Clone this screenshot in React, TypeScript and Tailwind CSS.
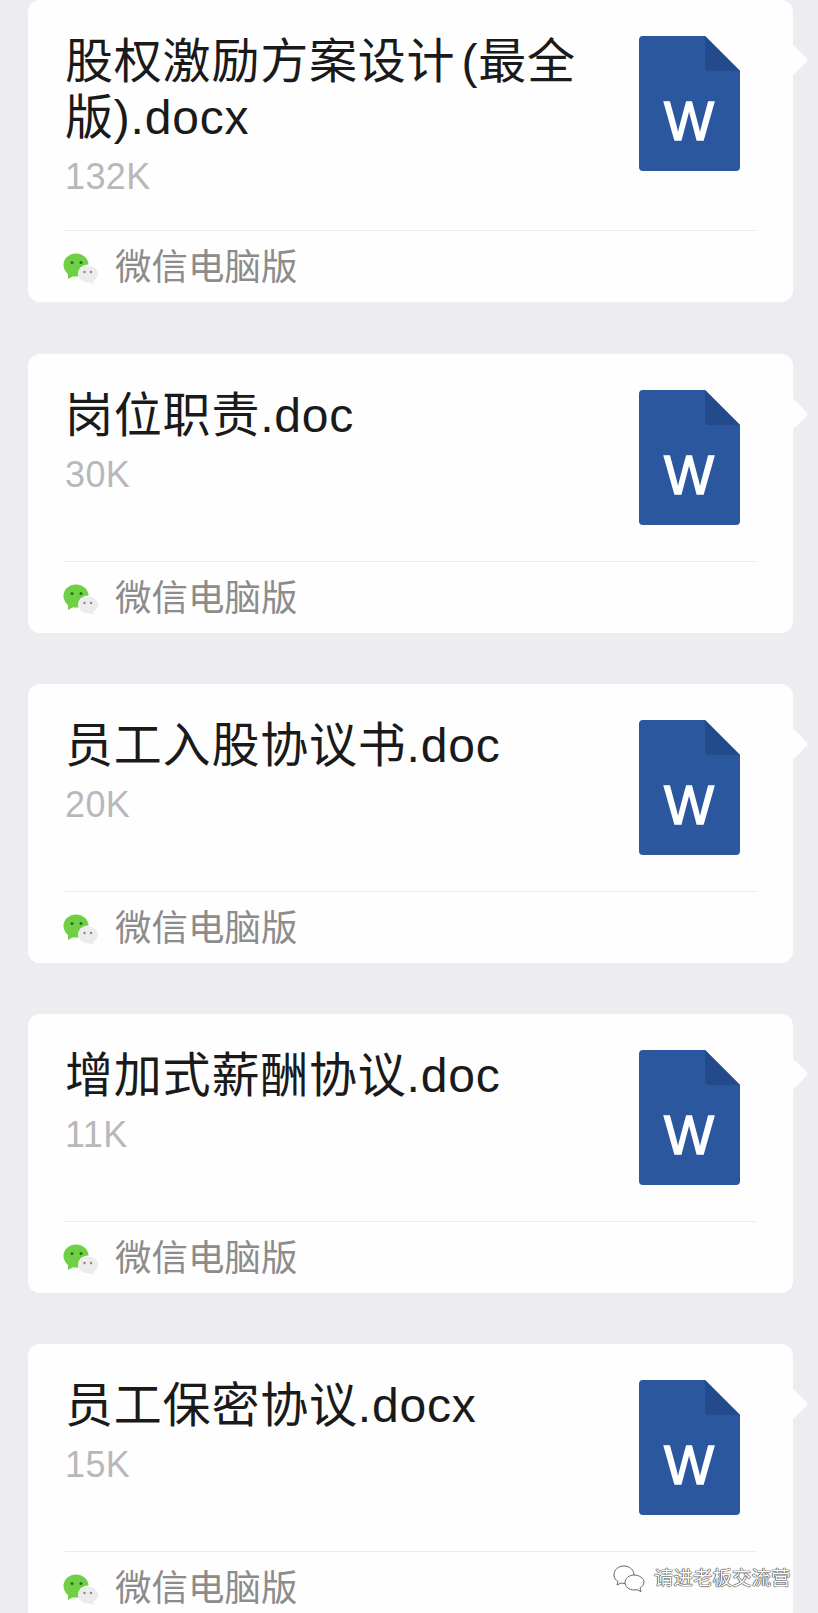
import React from 'react';

const files = [
  { name: '股权激励方案设计 (最全版).docx', size: '132K' },
  { name: '岗位职责.doc', size: '30K' },
  { name: '员工入股协议书.doc', size: '20K' },
  { name: '增加式薪酬协议.doc', size: '11K' },
  { name: '员工保密协议.docx', size: '15K' },
];

function WordIcon() {
  return (
    <svg width="101" height="135" viewBox="0 0 101 135" className="shrink-0">
      <path d="M4 0H66L101 35V131a4 4 0 01-4 4H4a4 4 0 01-4-4V4a4 4 0 014-4z" fill="#2b579f" />
      <path d="M66 0L101 35H70a4 4 0 01-4-4z" fill="#234a8a" />
      <text x="25" y="104" textLength="50" lengthAdjust="spacingAndGlyphs" fontSize="56" stroke="#fff" strokeWidth="1.5" fill="#fff" fontFamily="Liberation Sans, sans-serif">
        W
      </text>
    </svg>
  );
}

function WechatIcon() {
  return (
    <svg width="36" height="32" viewBox="0 0 36 32" className="shrink-0 blur-[0.6px]">
      <ellipse cx="13" cy="12" rx="12.500" ry="11.500" fill="#6fcf45" />
      <path d="M5 19l0 7 7-4z" fill="#6fcf45" />
      <circle cx="9" cy="9.500" r="1.500" fill="#2f6b22" />
      <circle cx="18" cy="9.500" r="1.500" fill="#2f6b22" />
      <ellipse cx="25" cy="20.500" rx="10" ry="9" fill="#ffffff" />
      <ellipse cx="25" cy="21" rx="10" ry="8.500" fill="#ececec" />
      <path d="M29 27l3 4-7-2z" fill="#ececec" />
      <circle cx="21.500" cy="19" r="1.200" fill="#888" />
      <circle cx="28" cy="19" r="1.200" fill="#888" />
    </svg>
  );
}

function FileCard({ name, size }: { name: string; size: string }) {
  return (
    <div className="relative w-[765px] rounded-xl bg-[#fffefe] first:mb-px">
      {/* bubble tail */}
      <div className="absolute left-[754px] top-[49px] h-[22px] w-[22px] rotate-45 rounded-[3px] bg-[#fffefe]" />
      <div className="relative px-[37px]">
        <div className="flex items-start justify-between py-[36px] pr-[16px]">
          <div className="w-[530px] -mt-[2px]">
            <div className="text-[48px] leading-[56px] tracking-[0.8px] [word-spacing:-8px] text-[#1a1a1a]">{name}</div>
            <div className="mt-[14px] text-[36px] leading-[34px] tracking-[0.4px] text-[#b8b8bb]">{size}</div>
          </div>
          <WordIcon />
        </div>
        <div className="h-px bg-[#ebebeb]" />
        <div className="flex h-[71px] items-center gap-[16px] pt-[4px]">
          <div className="-ml-[2px] flex">
            <WechatIcon />
          </div>
          <span className="text-[36.500px] text-[#8c8c8c]">微信电脑版</span>
        </div>
      </div>
    </div>
  );
}

export default function App() {
  return (
    <div className="relative h-[1613px] w-[818px] overflow-hidden bg-[#edecf0] pl-[28px] font-['Liberation_Sans','Noto_Sans_CJK_SC',sans-serif]">
      <div className="flex flex-col gap-[51px]">
        {files.map((f) => (
          <FileCard key={f.name} name={f.name} size={f.size} />
        ))}
      </div>

      {/* watermark */}
      <div className="absolute left-[613px] top-[1565px] flex items-center gap-[9px]">
        <svg width="32" height="28" viewBox="0 0 32 28" fill="#fff" stroke="#666" strokeWidth="1">
          <path d="M11 1C5 1 1 5 1 10c0 3 1.500 5 4 6.500L4 20l4-2c1 .3 2 .4 3 .4 6 0 10-4 10-8.500S17 1 11 1z" />
          <path d="M21 10c-5 0-9 3.500-9 7.500s4 7.500 9 7.500c1 0 2-.2 3-.4l4 2-1-3.500c2-1.500 4-3.500 4-6 0-4-5-7.100-10-7.100z" />
        </svg>
        <span className="text-[19.5px] leading-none text-white [text-shadow:0_0_1px_#222,0_0_1px_#222,0_0_1px_#222]">请进老板交流营</span>
      </div>
    </div>
  );
}
